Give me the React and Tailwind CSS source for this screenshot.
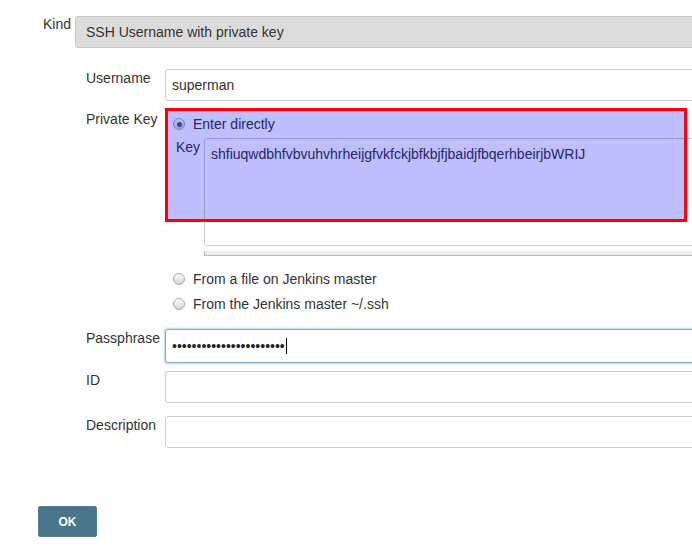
import React from 'react';

const Radio = ({ checked }) => (
  <span className="w-[12px] h-[12px] rounded-full border border-[#a8a8a8] bg-gradient-to-b from-[#fdfdfd] to-[#d4d4d4] flex items-center justify-center shrink-0">
    {checked && <span className="w-[5px] h-[5px] rounded-full bg-[#5a5a5a]" />}
  </span>
);

const Field = ({ label, className = '', children }) => (
  <div className={`flex items-start ${className}`}>
    <div className="w-[79px] shrink-0 leading-4 pt-[1px]">{label}</div>
    {children}
  </div>
);

const TextBox = ({ children, className = '' }) => (
  <div className={`flex-1 h-8 border border-[#cccccc] rounded-[3px] bg-white pl-[6px] flex items-center text-[#333] ${className}`}>
    {children}
  </div>
);

export default function App() {
  return (
    <div className="w-[692px] h-[551px] overflow-hidden bg-white text-[14px] text-[#333] font-['Liberation_Sans',Arial,sans-serif]">
      <div className="w-[800px] pt-4">
        <div className="flex items-start">
          <div className="w-[75px] pl-[43px] leading-4 shrink-0">Kind</div>
          <div className="flex-1 h-8 bg-[#dcdcdc] border border-[#c8c8c8] rounded-[3px] pl-[10px] flex items-center">
            SSH Username with private key
          </div>
        </div>

        <div className="ml-[86px] mt-[21px]">
          <Field label="Username" className="">
            <TextBox>superman</TextBox>
          </Field>

          <div className="flex items-start mt-[7px]">
            <div className="w-[79px] shrink-0 leading-4 pt-[3px]">Private Key</div>
            <div className="relative flex-1">
              <div className="pt-[8px] pl-[8px] flex items-center gap-[8px] leading-4">
                <Radio checked />
                <span>Enter directly</span>
              </div>
              <div className="flex items-start mt-[6px]">
                <div className="w-[39px] pl-[11px] pt-[1px] leading-4 shrink-0">Key</div>
                <div className="flex-1 h-[108px] border border-[#cccccc] rounded-[3px] rounded-br-none bg-white px-[6px] pt-[7px] leading-4">
                  shfiuqwdbhfvbvuhvhrheijgfvkfckjbfkbjfjbaidjfbqerhbeirjbWRIJ
                </div>
              </div>
              <div className="ml-[39px] mt-[5px] h-[5px] bg-[#ececec] border-l border-b border-[#bdbdbd]" />
              <div className="mt-[15px] pl-[8px] flex flex-col gap-[9px] leading-4">
                <div className="flex items-center gap-[8px]">
                  <Radio />
                  <span>From a file on Jenkins master</span>
                </div>
                <div className="flex items-center gap-[8px]">
                  <Radio />
                  <span>From the Jenkins master ~/.ssh</span>
                </div>
              </div>
              <div className="absolute left-0 top-0 w-[522px] h-[114px] border-[3px] border-[#ff0000] bg-[rgba(0,0,255,0.25)]" />
            </div>
          </div>

          <Field label="Passphrase" className="mt-[17px]">
            <div className="flex-1 h-[34px] border border-[#80a8d8] rounded-[3px] bg-white pl-[6px] flex items-center shadow-[0_0_2px_1px_rgba(140,180,225,0.6)]">
              <span className="leading-4 text-[#222]">{'•'.repeat(23)}</span>
              <span className="inline-block w-px h-[16px] bg-black ml-[1px]" />
            </div>
          </Field>

          <Field label="ID" className="mt-[8px]">
            <TextBox />
          </Field>

          <Field label="Description" className="mt-[13px]">
            <TextBox />
          </Field>
        </div>

        <button className="ml-[38px] mt-[58px] w-[59px] h-[31px] bg-[#4b758b] border border-[#57809a] rounded-[2px] text-white font-bold text-[12px] flex items-center justify-center">
          OK
        </button>
      </div>
    </div>
  );
}
